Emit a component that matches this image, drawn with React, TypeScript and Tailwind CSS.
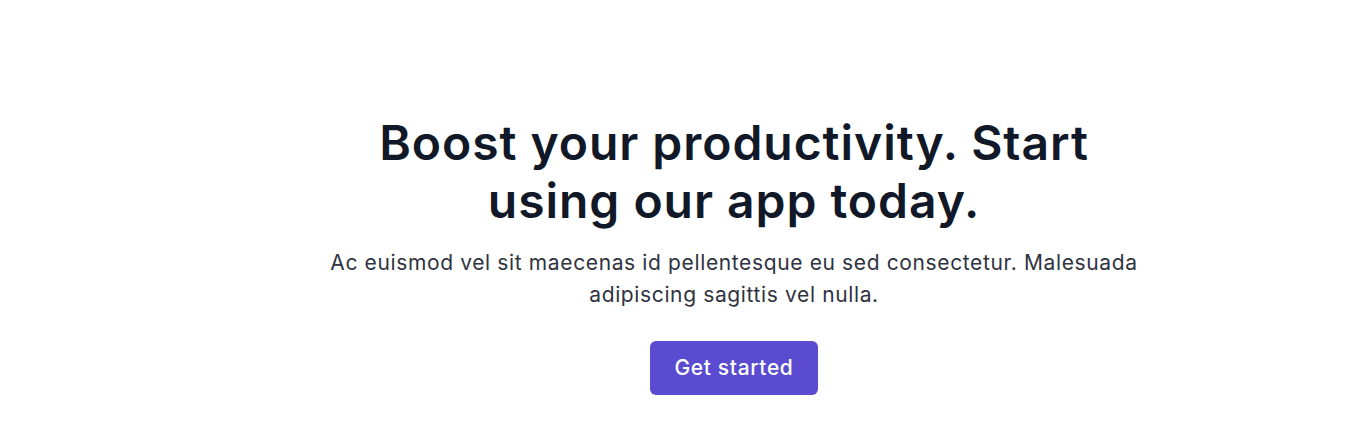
export default function App() {
  return (
    <div
      className="min-h-[432px] bg-white pl-[102px]"
      style={{ fontFamily: '"Inter", "Open Sans", sans-serif' }}
    >
      <section className="mx-auto flex max-w-5xl flex-col items-center px-6 pt-[114px] pb-[37px] text-center">
        <h2 className="max-w-[740px] text-5xl leading-[58px] font-semibold tracking-[0.02em] text-[#111827]">
          Boost your productivity. Start using our app today.
        </h2>
        <p className="mt-[17px] max-w-[830px] text-[21px] leading-8 tracking-[0.03em] text-[#2f3340]">
          Ac euismod vel sit maecenas id pellentesque eu sed consectetur. Malesuada adipiscing sagittis vel nulla.
        </p>
        <a
          href="#"
          className="mt-[30px] rounded-md bg-[#5a4bd1] px-[25px] py-[13px] text-[21px] leading-7 font-medium tracking-[0.03em] text-white"
        >
          Get started
        </a>
      </section>
    </div>
  )
}
